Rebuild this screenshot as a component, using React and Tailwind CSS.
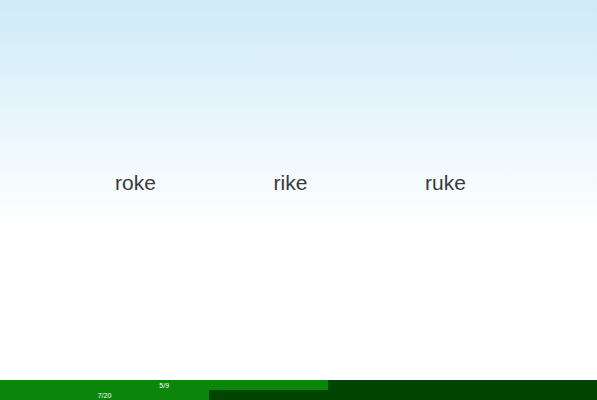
import React from 'react';

const words = ['roke', 'rike', 'ruke'];

const bars = [
  { label: '5/9', value: 0.55 },
  { label: '7/20', value: 0.35 },
];

const ProgressBar = ({ label, value }) => (
  <div className="relative h-[10px] w-full bg-[#024502]">
    <div
      className="flex h-full items-center justify-center bg-[#0b860b]"
      style={{ width: `${value * 100}%` }}
    >
      <span className="text-[7px] leading-none text-white">{label}</span>
    </div>
  </div>
);

export default function App() {
  return (
    <div
      className="flex h-[400px] w-[597px] flex-col bg-gradient-to-b from-[#cfebf8] to-white to-[57%]"
      style={{ fontFamily: '"Liberation Sans", Arial, sans-serif' }}
    >
      {/* word choices */}
      <div className="flex flex-1 items-start pl-[58px] pt-[170px]">
        {words.map((w) => (
          <div key={w} className="w-[155px] text-center text-[21px] leading-[26px] text-[#3a3a3a]">
            {w}
          </div>
        ))}
      </div>

      {/* progress */}
      <div className="flex flex-col">
        {bars.map((b) => (
          <ProgressBar key={b.label} {...b} />
        ))}
      </div>
    </div>
  );
}
